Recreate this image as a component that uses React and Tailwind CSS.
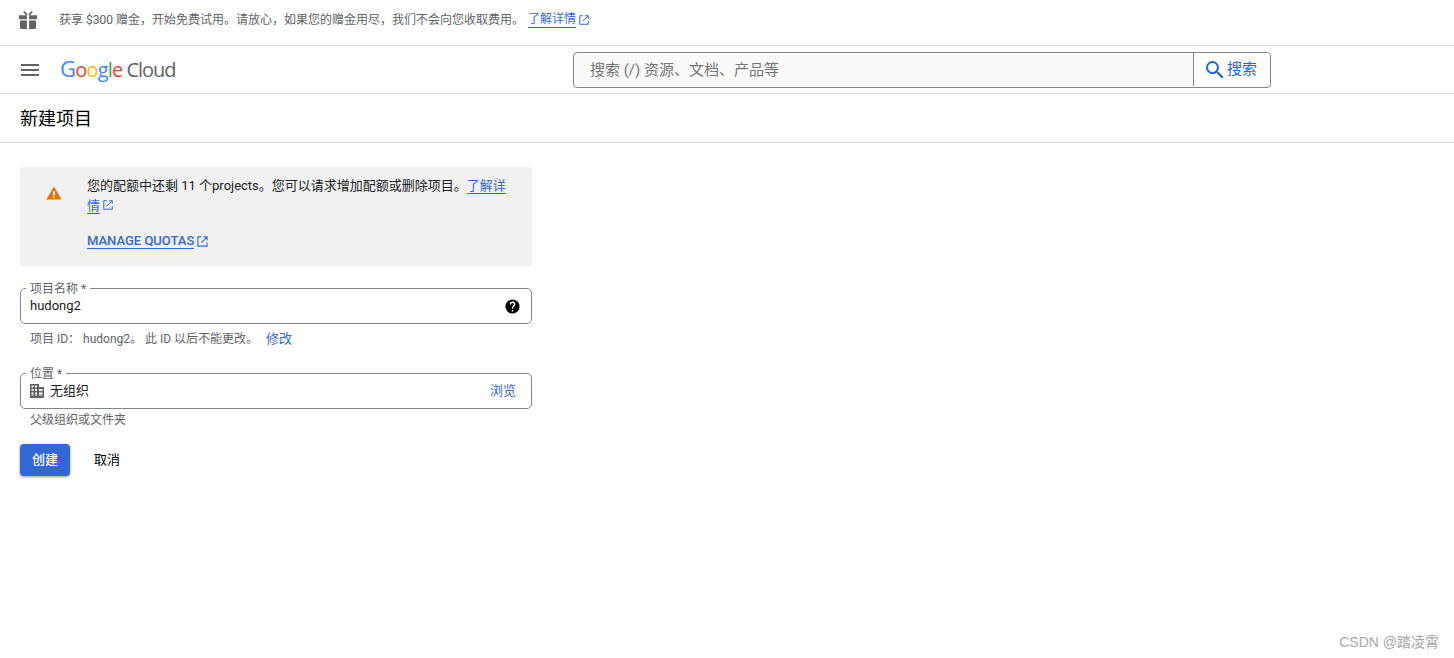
import React from "react";

function Ext({ className = "" }) {
  return (
    <svg viewBox="0 0 24 24" className={"inline-block " + className} fill="none" stroke="currentColor" strokeWidth="2">
      <path d="M10 3.5H3.5v17h17V14M14 3.5h6.5V10M20.5 3.5 10 14" />
    </svg>
  );
}

function Field({ label, children }) {
  return (
    <div className="relative h-[36px] w-[512px] rounded-[5px] border border-[#80868b] flex items-center pl-[9px] pr-[14px]">
      <span className="absolute left-[5px] top-[-7px] bg-white px-[4px] text-[12px] leading-[14px] text-[#5f6368]">{label}</span>
      {children}
    </div>
  );
}

export default function App() {
  return (
    <div className="relative h-[658px] w-full overflow-hidden bg-white font-['Roboto','Noto_Sans_CJK_SC',sans-serif] text-[#202124]">
      {/* promo banner */}
      <div className="flex h-[46px] items-center border-b border-[#dadce0] pl-[18px] pb-[5px]">
        <svg viewBox="0 0 20 20" className="h-[20px] w-[20px] text-[#5f6368]" fill="currentColor">
          <path d="M1 5.2h7.9v4H1zM11.1 5.2H19v4h-7.9zM2 10.5h6.9V19H3.2A1.2 1.2 0 0 1 2 17.8zM11.1 10.5H18v7.3a1.2 1.2 0 0 1-1.2 1.2h-5.7z" />
          <path d="M10 4.6 6.4 1l-1.2 1 2.6 3zM10 4.6 13.6 1l1.2 1-2.6 3z" />
        </svg>
        <span className="ml-[21px] text-[12px] text-[#5f6368]">获享 $300 赠金，开始免费试用。请放心，如果您的赠金用尽，我们不会向您收取费用。</span>
        <a className="ml-[4px] flex items-center text-[12px] leading-[15px] text-[#3367d6]">
          <span className="border-b border-[#3367d6]">了解详情</span>
          <Ext className="ml-[2px] h-[12px] w-[12px]" />
        </a>
      </div>

      {/* top header */}
      <div className="relative flex h-[48px] items-center border-b border-[#dadce0] pl-[21px]">
        <svg viewBox="0 0 18 12" className="h-[12px] w-[18px] text-[#5f6368]" fill="currentColor">
          <path d="M0 0h18v2H0zM0 5h18v2H0zM0 10h18v2H0z" />
        </svg>
        <div className="ml-[21px] mt-[-2px] flex items-baseline font-['Open_Sans',sans-serif] text-[20px] tracking-[-0.8px]">
          <span className="text-[22px] font-medium text-[#4285f4]">G</span>
          <span className="font-medium text-[#ea4335]">o</span>
          <span className="font-medium text-[#fbbc05]">o</span>
          <span className="font-medium text-[#4285f4]">g</span>
          <span className="font-medium text-[#34a853]">l</span>
          <span className="font-medium text-[#ea4335]">e</span>
          <span className="ml-[4px] tracking-[-1px] text-[#5f6368]">Cloud</span>
        </div>
        <div className="absolute left-[573px] top-[6px] flex h-[36px] w-[698px] rounded-[4px] border border-[#80868b] bg-[#fafafa]">
          <span className="flex-1 pl-[16px] text-[15px] leading-[34px] text-[#757575]">搜索 (/) 资源、文档、产品等</span>
          <div className="flex w-[77px] items-center border-l border-[#80868b] bg-white pl-[9px] rounded-r-[4px] mb-[1px]">
            <svg viewBox="0 0 24 24" className="h-[24px] w-[24px] text-[#1a66d6]" fill="currentColor">
              <path d="M15.5 14h-.79l-.28-.27A6.47 6.47 0 0 0 16 9.5 6.5 6.5 0 1 0 9.5 16c1.61 0 3.09-.59 4.23-1.57l.27.28v.79l5 4.99L20.49 19l-4.99-5zm-6 0C7.01 14 5 11.99 5 9.5S7.01 5 9.5 5 14 7.01 14 9.5 11.99 14 9.5 14z" />
            </svg>
            <span className="text-[15px] text-[#1a66d6]">搜索</span>
          </div>
        </div>
      </div>

      {/* page title */}
      <div className="flex h-[49px] items-center border-b border-[#dadce0] pl-[20px] text-[18px] text-black">新建项目</div>

      {/* form */}
      <div className="pl-[20px] pt-[24px]">
        <div className="flex h-[99px] w-[512px] rounded-[4px] bg-[#f1f1f1]">
          <div className="w-[67px] pl-[26px] pt-[19px]">
            <svg viewBox="0 0 16 14" className="h-[14px] w-[16px]">
              <path d="M8 0.5 15.6 13.5H0.4z" fill="#e37400" />
              <path d="M7.2 5h1.6v4.4H7.2zM7.2 10.4h1.6V12H7.2z" fill="#fff" />
            </svg>
          </div>
          <div className="w-[425px] pt-[9px] text-[13px] leading-[20px] text-[#202124]">
            <div>
              <span>您的配额中还剩 11 个projects。您可以请求增加配额或删除项目。</span>
              <a className="text-[#3367d6] underline underline-offset-[3px]">了解详情</a>
              <Ext className="ml-[2px] h-[12px] w-[12px] text-[#3367d6] align-[-1px]" />
            </div>
            <div className="mt-[17px] flex items-center text-[13px] font-medium text-[#3367d6]">
              <span className="border-b border-[#3367d6] leading-[15px]">MANAGE QUOTAS</span>
              <Ext className="ml-[2px] h-[13px] w-[13px]" />
            </div>
          </div>
        </div>

        <div className="mt-[22px]">
          <Field label="项目名称 *">
            <span className="flex-1 text-[13px] text-[#202124]">hudong2</span>
            <svg viewBox="0 0 24 24" className="mr-[-4px] h-[17px] w-[17px]" fill="#000">
              <path d="M12 2a10 10 0 1 0 0 20 10 10 0 0 0 0-20zm1 17h-2v-2h2v2zm2.07-7.75-.9.92C13.45 12.9 13 13.5 13 15h-2v-.5c0-1.1.45-2.1 1.17-2.83l1.24-1.26A2 2 0 0 0 14 9a2 2 0 1 0-4 0H8a4 4 0 1 1 8 0c0 .88-.36 1.68-.93 2.25z" />
            </svg>
          </Field>
        </div>
        <div className="mt-[6px] flex h-[17px] items-center pl-[10px] text-[12px] text-[#5f6368]">
          <span>项目 ID： hudong2。 此 ID 以后不能更改。</span>
          <a className="ml-[8px] text-[13px] text-[#3367d6]">修改</a>
        </div>

        <div className="mt-[26px]">
          <Field label="位置 *">
            <svg viewBox="0 0 14 14" className="h-[14px] w-[14px] text-[#5f6368]" fill="currentColor" fillRule="evenodd">
              <path d="M0 0h9v3h5v11H0zM1.5 1.5v2h2v-2zM5 1.5v2h2v-2zM1.5 5v2h2V5zM5 5v2h2V5zM9 5v2h3.5V5zM1.5 8.5v2h2v-2zM5 8.5v2h2v-2zM9 8.5v2h3.5v-2zM1.5 12h2v-.5h-2zM5 12h2v-.5H5zM9 12h3.5v-.5H9z" />
            </svg>
            <span className="ml-[6px] flex-1 text-[13px] leading-[18px] mb-[1px] text-[#202124]">无组织</span>
            <a className="mr-[1px] mb-[1px] text-[13px] text-[#3367d6]">浏览</a>
          </Field>
        </div>
        <div className="mt-[3px] h-[17px] pl-[10px] text-[12px] leading-[17px] text-[#5f6368]">父级组织或文件夹</div>

        <div className="mt-[15px] flex items-center">
          <button className="h-[32px] w-[50px] rounded-[4px] bg-[#3367d6] pb-[1px] text-[13px] font-medium text-white shadow-[0_1px_3px_rgba(0,0,0,0.4)]">创建</button>
          <button className="ml-[24px] mb-[1px] text-[13px] text-black">取消</button>
        </div>
      </div>

      <span className="absolute bottom-[5px] right-[15px] font-['Liberation_Sans','Noto_Sans_CJK_SC',sans-serif] text-[14px] text-[#a8a8a8]">CSDN @踏凌霄</span>
    </div>
  );
}
